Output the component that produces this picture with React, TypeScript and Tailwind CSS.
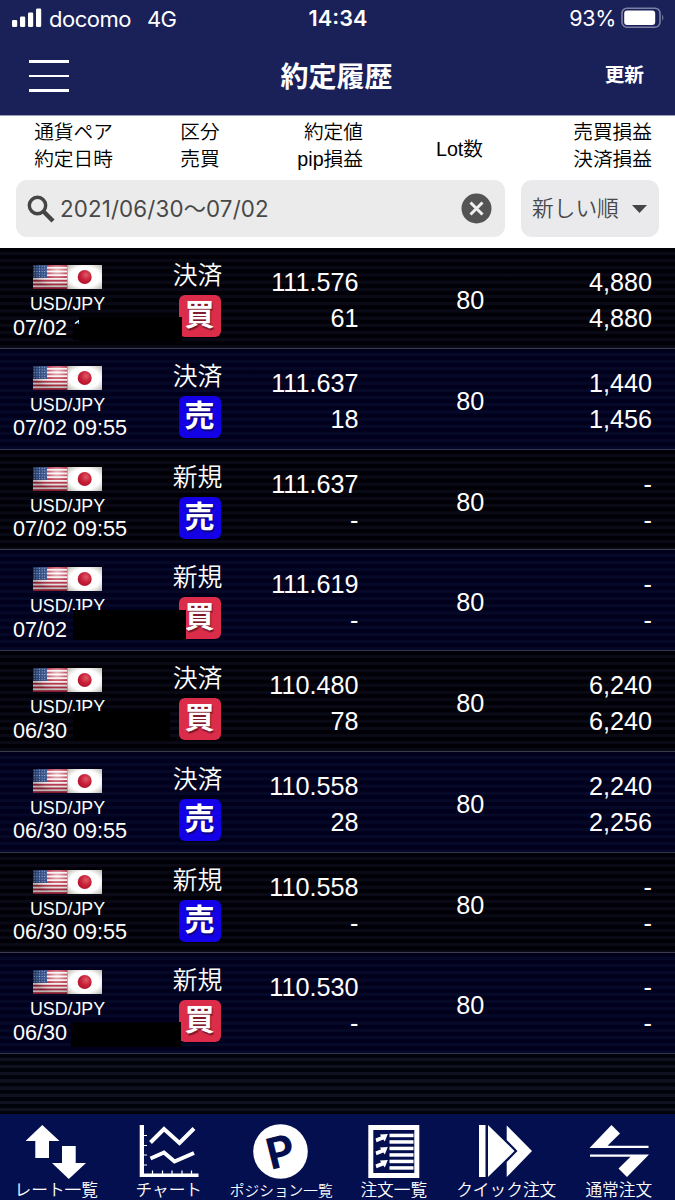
import type { ReactNode } from 'react';
import clsx from 'clsx';

type Mask = { className: string };

type Trade = {
  date: string;
  kind: string;
  side: '買' | '売';
  price: string;
  pip: string;
  lot: number;
  profit: string;
  settled: string;
  masks?: Mask[];
};

const trades: Trade[] = [
  {
    date: '07/02 1', kind: '決済', side: '買', price: '111.576', pip: '61', lot: 80, profit: '4,880', settled: '4,880',
    masks: [
      { className: 'left-[79px] top-[69px] w-[103px] h-[24px]' },
      { className: 'left-[73px] top-[76px] w-[10px] h-[16px]' },
    ],
  },
  { date: '07/02 09:55', kind: '決済', side: '売', price: '111.637', pip: '18', lot: 80, profit: '1,440', settled: '1,456' },
  { date: '07/02 09:55', kind: '新規', side: '売', price: '111.637', pip: '-', lot: 80, profit: '-', settled: '-' },
  {
    date: '07/02', kind: '新規', side: '買', price: '111.619', pip: '-', lot: 80, profit: '-', settled: '-',
    masks: [{ className: 'left-[73px] top-[60px] w-[113px] h-[30px]' }],
  },
  {
    date: '06/30', kind: '決済', side: '買', price: '110.480', pip: '78', lot: 80, profit: '6,240', settled: '6,240',
    masks: [{ className: 'left-[73px] top-[60px] w-[97px] h-[30px]' }],
  },
  { date: '06/30 09:55', kind: '決済', side: '売', price: '110.558', pip: '28', lot: 80, profit: '2,240', settled: '2,256' },
  { date: '06/30 09:55', kind: '新規', side: '売', price: '110.558', pip: '-', lot: 80, profit: '-', settled: '-' },
  {
    date: '06/30', kind: '新規', side: '買', price: '110.530', pip: '-', lot: 80, profit: '-', settled: '-',
    masks: [{ className: 'left-[71px] top-[69px] w-[110px] h-[25px]' }],
  },
];

function StatusBar() {
  return (
    <div className="grid grid-cols-[1fr_auto_1fr] items-center h-[37px] pl-[11px] pr-[10px] font-['Inter'] text-[22px] leading-none">
      <div className="flex items-center">
        <svg width="31" height="20" viewBox="0 0 31 20" fill="currentColor" className="-mt-[2px]">
          <rect x="1" y="12" width="5.2" height="7" rx="1.2" />
          <rect x="9" y="8.5" width="5.2" height="10.5" rx="1.2" />
          <rect x="17" y="4.5" width="5.2" height="14.5" rx="1.2" />
          <rect x="25" y="0.5" width="5.2" height="18.5" rx="1.2" />
        </svg>
        <span className="ml-[7px] tracking-[-0.5px]">docomo</span>
        <span className="ml-[16px] tracking-[-0.5px]">4G</span>
      </div>
      <span className="font-semibold text-[21.7px]">14:34</span>
      <div className="flex items-center justify-end">
        <span className="mr-[5px] text-[21.5px] tracking-[-0.3px]">93%</span>
        <svg width="44" height="22" viewBox="0 0 44 22" className="-mt-[2px]">
          <rect x="1" y="1.2" width="38" height="19" rx="5" fill="none" stroke="#7d80a6" strokeWidth="1.6" />
          <rect x="3.2" y="3.6" width="31" height="14.4" rx="3" fill="#fff" />
          <path d="M41.2 7.5q2.4 3.2 0 6.4z" fill="#7d80a6" />
        </svg>
      </div>
    </div>
  );
}

function Flags() {
  return (
    <svg width="69" height="24" viewBox="0 0 69 24" className="-ml-[5px]">
      <defs>
        <radialGradient id="shine" cx="0.7" cy="0.25" r="0.7">
          <stop offset="0" stopColor="#fff" stopOpacity="0.75" />
          <stop offset="0.5" stopColor="#fff" stopOpacity="0.1" />
          <stop offset="1" stopColor="#000" stopOpacity="0.25" />
        </radialGradient>
        <radialGradient id="paper" cx="0.5" cy="0.5" r="0.72">
          <stop offset="0.6" stopColor="#fff" />
          <stop offset="1" stopColor="#b5b3a8" />
        </radialGradient>
        <radialGradient id="sun" cx="0.6" cy="0.35" r="0.65">
          <stop offset="0" stopColor="#dd5a66" />
          <stop offset="0.6" stopColor="#c81f38" />
          <stop offset="1" stopColor="#b5142c" />
        </radialGradient>
        <pattern id="stars" width="2.6" height="2.6" patternUnits="userSpaceOnUse">
          <rect width="2.6" height="2.6" fill="#1f3f7d" />
          <circle cx="1.3" cy="1.3" r="0.6" fill="#9fb4d8" />
        </pattern>
      </defs>
      <rect width="34.5" height="24" fill="#f4eeee" />
      {[0, 1, 2, 3, 4, 5, 6].map(i => (
        <rect key={i} y={i * 3.7} width="34.5" height="1.85" fill="#b3243c" />
      ))}
      <rect width="14" height="12.9" fill="url(#stars)" />
      <rect width="34.5" height="24" fill="url(#shine)" />
      <rect x="34.5" width="34.5" height="24" fill="url(#paper)" />
      <circle cx="51.7" cy="12" r="7" fill="url(#sun)" />
    </svg>
  );
}

function TradeRow({ trade, odd }: { trade: Trade; odd: boolean }) {
  return (
    <div
      className={clsx(
        'relative grid grid-cols-[139px_121px_98.5px_223.5px_1fr] h-[100.75px] pr-[23px] border-b text-[25.2px] leading-[36px]',
        odd
          ? 'border-[#34374f] bg-[repeating-linear-gradient(#00001c_0px,#00001c_3.4px,#060828_4.2px,#060828_6.6px,#00001c_7.196px)]'
          : 'border-[#3a3d4c] bg-[repeating-linear-gradient(#000006_0px,#000006_3.4px,#090a15_4.2px,#090a15_6.6px,#000006_7.196px)]'
      )}
    >
      <div className="flex flex-col items-center pt-[17px]">
        <Flags />
        <span className="mt-[5px] -ml-[4px] text-[17.8px] leading-[20px]">USD/JPY</span>
        <span className="mt-[1.5px] self-start pl-[13px] text-[21.6px] leading-[24px] whitespace-pre">{trade.date}</span>
      </div>
      <div className="flex flex-col items-center pt-[14px]">
        <span className="-ml-[4px] text-[24.8px] leading-[28px] font-[350]">{trade.kind}</span>
        <span
          className={clsx(
            'mt-[5px] size-[42px] rounded-[6px] text-center text-[30px] leading-[40px] font-bold [text-shadow:1px_2px_1px_rgba(0,0,0,0.45)]',
            trade.side === '買' ? 'bg-[#db2c49]' : 'bg-[#1400e6]'
          )}
        >
          {trade.side}
        </span>
      </div>
      <div className="flex flex-col items-end pt-4">
        <span>{trade.price}</span>
        <span>{trade.pip}</span>
      </div>
      <div className="pt-[34px] text-center">{trade.lot}</div>
      <div className="flex flex-col items-end pt-4">
        <span>{trade.profit}</span>
        <span>{trade.settled}</span>
      </div>
      {trade.masks?.map((mask, i) => (
        <div key={i} className={clsx('absolute bg-black', mask.className)} />
      ))}
    </div>
  );
}

function NavItem({ label, small, children }: { label: string; small?: boolean; children: ReactNode }) {
  return (
    <div className="flex flex-col items-center pt-[8.5px]">
      <svg width="60" height="58" viewBox="0 0 60 58" fill="#fff">
        {children}
      </svg>
      <span
        className={clsx(
          'mt-px whitespace-nowrap leading-[20px] font-[350]',
          small ? 'text-[14.7px]' : 'text-[16.7px]'
        )}
      >
        {label}
      </span>
    </div>
  );
}

const listArrow = 'M4.3 0.5 L12.3 0 L9.3 7.5 L7.8 5.5 L1 8.3 L0 4.5 L5.7 2.2 Z';

export default function App() {
  return (
    <div className="flex flex-col w-[675px] h-[1200px] overflow-hidden text-white bg-[#05060f] font-['Liberation_Sans','Noto_Sans_CJK_JP',sans-serif]">
      {/* App bar */}
      <header className="h-[115px] shrink-0 bg-[#1a2058]">
        <StatusBar />
        <div className="grid grid-cols-[1fr_auto_1fr] items-center h-[78px] pl-[29px] pr-[31px]">
          <div className="flex flex-col gap-[12px]">
            <span className="w-[40px] h-[2.5px] bg-white" />
            <span className="w-[40px] h-[2.5px] bg-white" />
            <span className="w-[40px] h-[2.5px] bg-white" />
          </div>
          <h1 className="pt-[3px] text-[28px] leading-[40px] font-bold">約定履歴</h1>
          <span className="text-right text-[19.7px] font-bold">更新</span>
        </div>
      </header>

      {/* Column titles and filter */}
      <section className="h-[133px] shrink-0 bg-white text-black border-t border-[#9c9fbb]">
        <div className="grid grid-cols-[147px_106px_110px_193px_1fr] h-[64px] pt-[3px] pr-[23px] text-[19.7px] leading-[27px] font-[350]">
          <div className="text-center">通貨ペア<br />約定日時</div>
          <div className="text-center">区分<br />売買</div>
          <div className="text-right">約定値<br />pip損益</div>
          <div className="text-center pt-[17px]">Lot数</div>
          <div className="text-right">売買損益<br />決済損益</div>
        </div>
        <div className="flex gap-[16px] px-4 font-['Inter','Noto_Sans_CJK_JP',sans-serif]">
          <div className="flex items-center w-[489px] h-[57px] pl-[11px] pr-[13px] rounded-[11px] bg-[#ebebeb] text-[#484848]">
            <svg width="28" height="28" viewBox="0 0 28 28" fill="none" stroke="#454545">
              <circle cx="10.5" cy="10.5" r="8.2" strokeWidth="3.4" />
              <path d="M16.5 16.5L26 26" strokeWidth="4.4" />
            </svg>
            <span className="ml-[5px] pt-px text-[22.3px] tracking-[0.15px]">2021/06/30～07/02</span>
            <svg width="31" height="31" viewBox="0 0 31 31" className="ml-auto">
              <circle cx="15.5" cy="15.5" r="15" fill="#545454" />
              <path d="M9.5 9.5l12 12M21.5 9.5l-12 12" stroke="#f0f0f0" strokeWidth="3" />
            </svg>
          </div>
          <div className="flex items-center w-[138px] h-[57px] pl-[11px] rounded-[11px] bg-[#eaeaec] text-[#484848]">
            <span className="text-[21.7px] font-[350]">新しい順</span>
            <svg width="15" height="8" viewBox="0 0 15 8" className="ml-[13px]">
              <path d="M0 0h15L7.5 8z" fill="#454545" />
            </svg>
          </div>
        </div>
      </section>

      {/* Trade list */}
      <main className="flex-1 bg-[repeating-linear-gradient(#02030a_0px,#02030a_3.4px,#0f1120_4px,#0f1120_6.8px,#02030a_7.196px)]">
        {trades.map((trade, i) => (
          <TradeRow key={i} trade={trade} odd={i % 2 === 1} />
        ))}
      </main>

      {/* Bottom navigation */}
      <nav className="grid grid-cols-6 h-[86.5px] shrink-0 bg-[#040f50]">
        <NavItem label="レート一覧">
          <path d="M16.3 3 L33.5 19 H23 V36 H9.3 V19 H-0.5 Z" />
          <path d="M36 24 H49.7 V41 H60 L42.8 57 L26 41 H36 Z" />
        </NavItem>
        <NavItem label="チャート">
          <path d="M0.7 3 H5 V51.5 H59.5 V55 H0.7 Z" />
          <path
            d="M5 13.5h3M5 23.5h3M5 33h3M5 43h3M13.5 48.5v4M23.5 48.5v4M33 48.5v4M43 48.5v4M52.5 48.5v4"
            stroke="#fff"
            strokeWidth="1.2"
          />
          <path d="M11.5 20.5 L25 7 L40.5 21 L55 6.5" fill="none" stroke="#fff" strokeWidth="4" />
          <path d="M11.5 36.5 L25 30.5 L35.5 39.5 L55 31" fill="none" stroke="#fff" strokeWidth="4" />
        </NavItem>
        <NavItem label="ポジション一覧" small>
          <circle cx="29.5" cy="29.5" r="27.3" />
          <text
            x="29.5"
            y="45"
            textAnchor="middle"
            transform="rotate(-14 29.5 29.5)"
            className="fill-[#040f50] font-['Inter'] text-[43px] font-bold"
          >
            P
          </text>
        </NavItem>
        <NavItem label="注文一覧">
          <rect x="6.8" y="5.5" width="46" height="48" fill="none" stroke="#fff" strokeWidth="5" />
          {[13.5, 20, 26.5, 33, 39.5, 46].map(y => (
            <rect key={y} x="25.5" y={y - 1.8} width="24" height="3.5" />
          ))}
          <path d={listArrow} transform="translate(11.5 12)" />
          <path d={listArrow} transform="translate(11.5 25)" />
          <path d={listArrow} transform="translate(11.5 38)" />
        </NavItem>
        <NavItem label="クイック注文">
          <rect x="3" y="3" width="6.5" height="52" />
          <path d="M12 3 L38.5 29 L12 55 Z" />
          <path d="M30.7 3.5 L56 29 L30.7 55 V40 L41.5 29 L30.7 18 Z" />
        </NavItem>
        <NavItem label="通常注文">
          <path d="M0.5 26 L22.5 3 L31 11.5 L18.5 23.8 H59.5 V26 Z" />
          <path d="M1 32.5 H60 L38 55 L29.5 46.5 L41.5 34.8 H1 Z" />
        </NavItem>
      </nav>
    </div>
  );
}
